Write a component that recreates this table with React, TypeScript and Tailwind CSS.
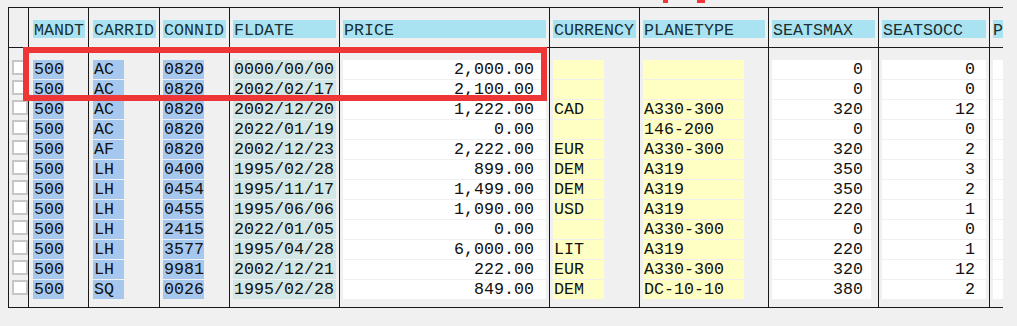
import React from 'react';

type Col = {
  key: string;
  w: string;
  ml: string;
  bw: string;
  bg: string;
  align: 'left' | 'right';
  pr?: string;
};

const cols: Col[] = [
  { key: 'MANDT', w: 'w-[60px]', ml: 'ml-[4px]', bw: 'w-[31px]', bg: 'bg-[#a7c8ee]', align: 'left' },
  { key: 'CARRID', w: 'w-[71px]', ml: 'ml-[4px]', bw: 'w-[31px]', bg: 'bg-[#a7c8ee]', align: 'left' },
  { key: 'CONNID', w: 'w-[70px]', ml: 'ml-[3px]', bw: 'w-[41px]', bg: 'bg-[#a7c8ee]', align: 'left' },
  { key: 'FLDATE', w: 'w-[110px]', ml: 'ml-[3px]', bw: 'w-[103px]', bg: 'bg-[#d3e7e7]', align: 'left' },
  { key: 'PRICE', w: 'w-[210px]', ml: 'ml-[3px]', bw: 'w-[203px]', bg: 'bg-white', align: 'right', pr: 'pr-[12px]' },
  { key: 'CURRENCY', w: 'w-[90px]', ml: 'ml-[3px]', bw: 'w-[51px]', bg: 'bg-[#ffffc4]', align: 'left' },
  { key: 'PLANETYPE', w: 'w-[129px]', ml: 'ml-[3px]', bw: 'w-[101px]', bg: 'bg-[#ffffc4]', align: 'left' },
  { key: 'SEATSMAX', w: 'w-[110px]', ml: 'ml-[3px]', bw: 'w-[99px]', bg: 'bg-white', align: 'right', pr: 'pr-[8px]' },
  { key: 'SEATSOCC', w: 'w-[111px]', ml: 'ml-[3px]', bw: 'w-[104px]', bg: 'bg-white', align: 'right', pr: 'pr-[11px]' },
];

const rows: string[][] = [
  ['500', 'AC', '0820', '0000/00/00', '2,000.00', '', '', '0', '0'],
  ['500', 'AC', '0820', '2002/02/17', '2,100.00', '', '', '0', '0'],
  ['500', 'AC', '0820', '2002/12/20', '1,222.00', 'CAD', 'A330-300', '320', '12'],
  ['500', 'AC', '0820', '2022/01/19', '0.00', '', '146-200', '0', '0'],
  ['500', 'AF', '0820', '2002/12/23', '2,222.00', 'EUR', 'A330-300', '320', '2'],
  ['500', 'LH', '0400', '1995/02/28', '899.00', 'DEM', 'A319', '350', '3'],
  ['500', 'LH', '0454', '1995/11/17', '1,499.00', 'DEM', 'A319', '350', '2'],
  ['500', 'LH', '0455', '1995/06/06', '1,090.00', 'USD', 'A319', '220', '1'],
  ['500', 'LH', '2415', '2022/01/05', '0.00', '', 'A330-300', '0', '0'],
  ['500', 'LH', '3577', '1995/04/28', '6,000.00', 'LIT', 'A319', '220', '1'],
  ['500', 'LH', '9981', '2002/12/21', '222.00', 'EUR', 'A330-300', '320', '12'],
  ['500', 'SQ', '0026', '1995/02/28', '849.00', 'DEM', 'DC-10-10', '380', '2'],
];

export default function App() {
  return (
    <div className="relative w-[1017px] h-[326px] overflow-hidden bg-[#f0f0f0] text-[#111] font-['Liberation_Mono',monospace] text-[16.67px]">
      <div className="ml-[8px] mt-[7px] flex w-[995px] border-l border-t border-b border-[#1a1a1a]">
        {/* row selector column */}
        <div className="flex w-[20px] flex-col border-r border-[#1a1a1a]">
          <div className="h-[40px] border-b border-[#1a1a1a]" />
          <div className="h-[259px] pt-[12px]">
            {rows.map((_, i) => (
              <div key={i} className="h-[20px]">
                <div className="ml-[3px] h-[15px] w-[16px] border-2 border-[#c6c6c6] bg-white" />
              </div>
            ))}
          </div>
        </div>

        {cols.map((c, ci) => (
          <div key={c.key} className={`flex flex-col border-r border-[#1a1a1a] ${c.w}`}>
            <div className="h-[40px] border-b border-[#1a1a1a] pt-[12px]">
              <div className={`mr-[3px] h-[18px] bg-[#a9e3f2] pl-[1px] leading-[21px] text-[#1b2f33] ${c.ml}`}>{c.key}</div>
            </div>
            <div className="h-[259px] pt-[12px]">
              {rows.map((r, i) => (
                <div key={i} className="h-[20px]">
                  <div
                    className={`h-[19px] whitespace-pre leading-[19px] ${c.ml} ${c.bw} ${c.bg} ${
                      c.align === 'right' ? `text-right ${c.pr}` : 'pl-[1px]'
                    }`}
                  >
                    {r[ci]}
                  </div>
                </div>
              ))}
            </div>
          </div>
        ))}

        {/* cut-off column */}
        <div className="flex w-[13px] flex-col">
          <div className="h-[40px] border-b border-[#1a1a1a] pt-[12px]">
            <div className="ml-[3px] h-[18px] w-[10px] bg-[#a9e3f2] leading-[21px] text-[#1b2f33]">P</div>
          </div>
          <div className="h-[259px] pt-[12px]">
            {rows.map((_, i) => (
              <div key={i} className="h-[20px]">
                <div className="ml-[3px] h-[19px] w-[10px] bg-white" />
              </div>
            ))}
          </div>
        </div>
      </div>

      {/* annotations */}
      <div className="absolute left-[23px] top-[47px] h-[54px] w-[524px] border-[6px] border-[#ee3636]" />
      <div className="absolute left-[663px] top-0 h-[3px] w-[5px] bg-[#ee3636]" />
      <div className="absolute left-[697px] top-0 h-[3px] w-[8px] bg-[#ee3636]" />
    </div>
  );
}
